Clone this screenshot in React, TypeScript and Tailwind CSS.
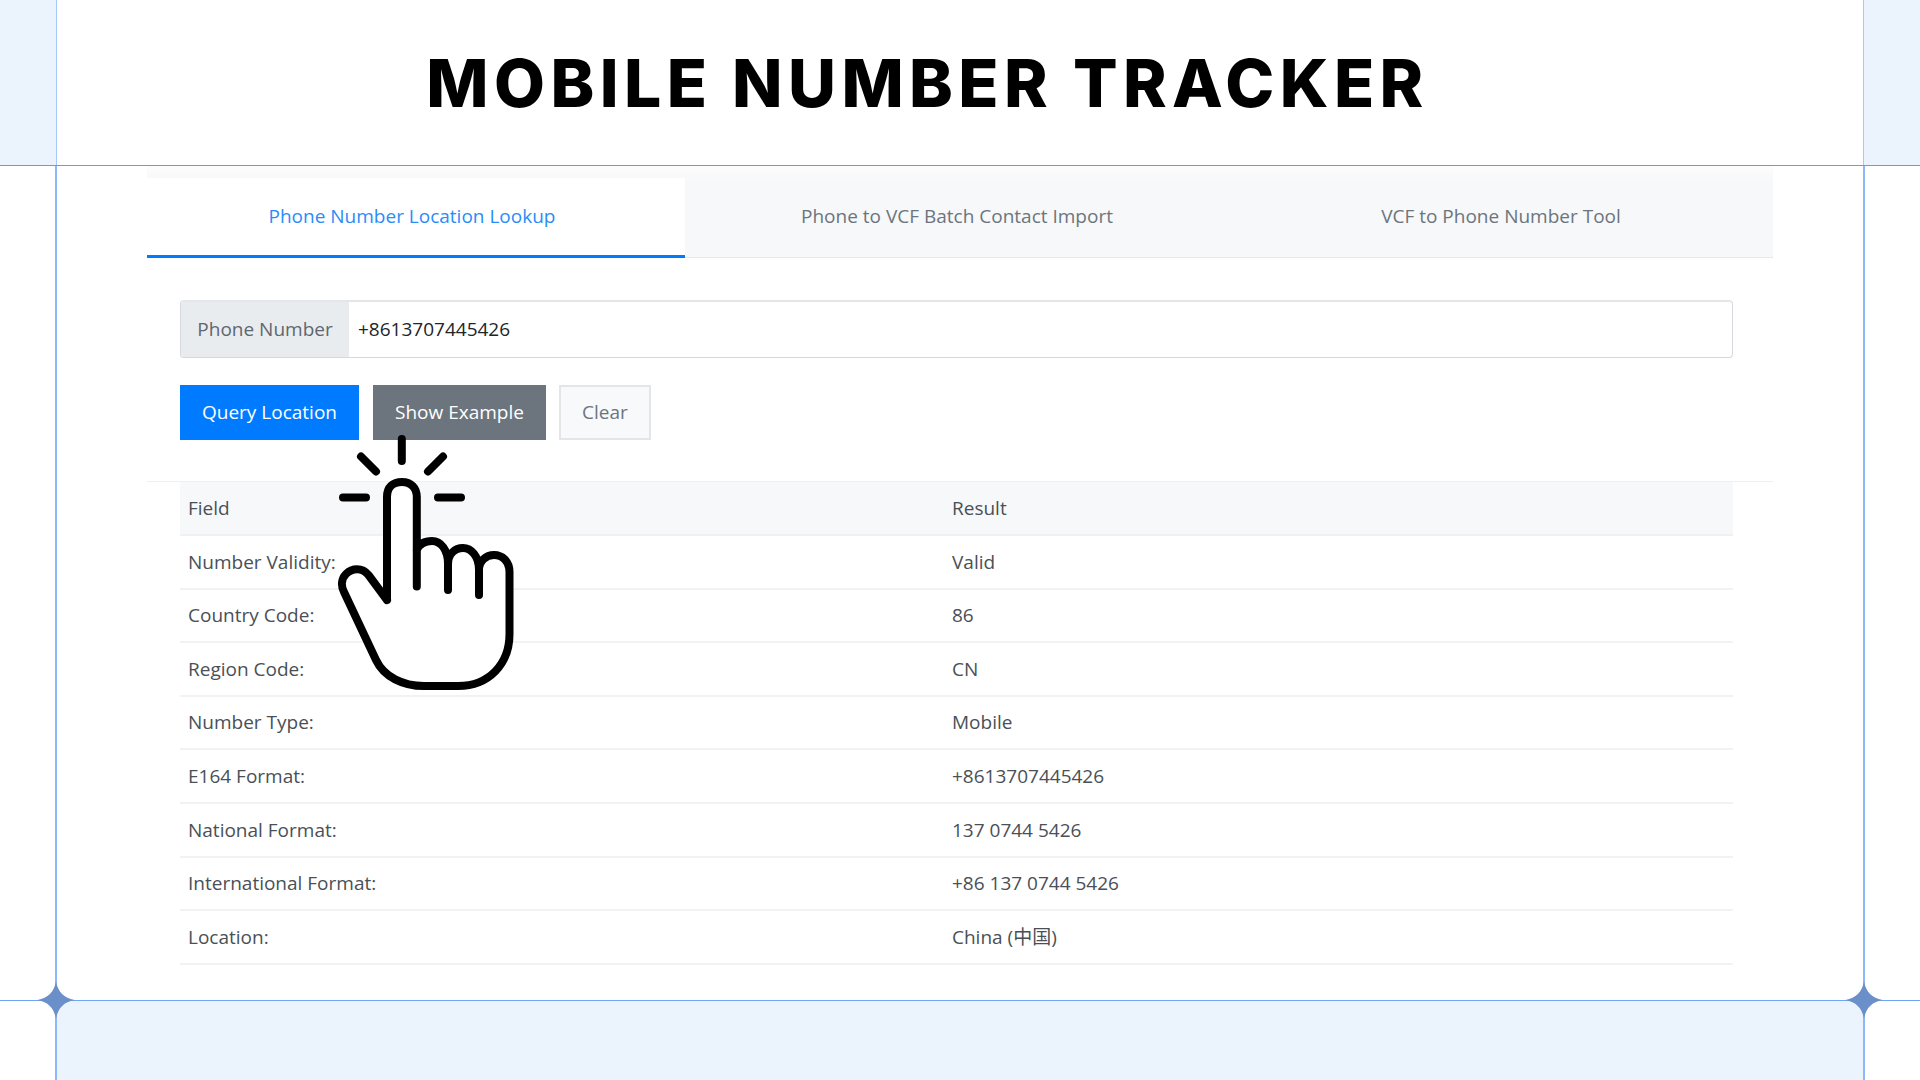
import React from "react";

const rows = [
  ["Number Validity:", "Valid"],
  ["Country Code:", "86"],
  ["Region Code:", "CN"],
  ["Number Type:", "Mobile"],
  ["E164 Format:", "+8613707445426"],
  ["National Format:", "137 0744 5426"],
  ["International Format:", "+86 137 0744 5426"],
  ["Location:", "China (中国)"],
];

const Star = ({ className }: { className: string }) => (
  <svg className={className} width="38" height="38" viewBox="0 0 38 38">
    <path d="M19 0.5 C21 11 27 17 37.5 19 C27 21 21 27 19 37.5 C17 27 11 21 0.5 19 C11 17 17 11 19 0.5 Z" fill="#6b90c9" />
  </svg>
);

const ClickHand = () => (
  <svg className="absolute left-[330px] top-[430px]" width="190" height="270" viewBox="330 430 190 270" fill="none" stroke="#000" strokeWidth="8" strokeLinecap="round" strokeLinejoin="round">
    {/* white silhouette, table lines do not show through the hand */}
    <path stroke="none" fill="#fff" d="M387 600V497C387 487 393 482 402 482C411 482 416.8 488 416.8 497V550C419 545 424 541 432 541C441 541 448 550 448 556C452 550 457 548 463 548C471 548 479 556 479 566C483 559 488 555 494 555C502 555 509.5 561 509.5 572V634C509.5 664 489 686 458 686H424C403 686 384 677 376 660L344 592C341 586 341 579 346 574C352 568 362 567 368.5 575Z" />
    {/* rays */}
    <path d="M401.8 439V461M361 456.5L376 471.5M443 456.5L428 471.5M343 497.5H366M438 497.5H461" />
    {/* outline */}
    <path d="M387 600V497C387 487 393 482 402 482C411 482 416.8 488 416.8 497V586.5M387 600L368.5 575C362 567 352 568 346 574C341 579 341 586 344 592L376 660C384 677 403 686 424 686H458C489 686 509.5 664 509.5 634V572C509.5 561 502 555 494 555C486 555 479 561 479 570V595M479 570C479 556 471 548 463 548C455 548 448 554 448 564V590M448 564C448 550 441 541 432 541C424 541 419 545 416.8 550" />
  </svg>
);

export default function App() {
  return (
    <div className="relative flex h-[1080px] w-[1920px] flex-col overflow-hidden bg-white font-['Open_Sans','Noto_Sans_CJK_SC',sans-serif] text-[19px] text-[#495057]">
      <div className="flex h-[166px] border-b border-[#5f9cf3]">
        <div className="w-[57px] border-r border-[#a9c8f7] bg-[#ebf3fd]" />
        <h1 className="flex flex-1 items-center justify-center pr-[65px] font-['Inter',sans-serif] text-[66px] font-extrabold leading-none tracking-[5.4px] text-black">
          MOBILE NUMBER TRACKER
        </h1>
        <div className="w-[57px] border-l border-[#a9c8f7] bg-[#ebf3fd]" />
      </div>

      <div className="flex h-[834px]">
        <div className="w-[57px] border-r-2 border-[#8ab8f8]" />
        <div className="flex-1 px-[90px]">
          <div className="flex h-[92px] bg-gradient-to-b from-[#fdfdfd] to-[#f7f8fa] to-[15%] pt-[12px]">
            <div className="flex w-[538px] items-center justify-center border-b-[3px] border-[#007bff] bg-white pb-[1px] pr-2 text-[#2b8cf7]">
              Phone Number Location Lookup
            </div>
            <div className="flex flex-1 items-center justify-center border-b border-[#e6e8ea] pb-[3px] text-[#6c757d]">
              Phone to VCF Batch Contact Import
            </div>
            <div className="flex flex-1 items-center justify-center border-b border-[#e6e8ea] pb-[3px] text-[#6c757d]">
              VCF to Phone Number Tool
            </div>
          </div>

          <div className="border-b border-[#eeeff1] pb-[41px] pl-[33px] pr-[40px] pt-[42px]">
            <div className="flex h-[58px] overflow-hidden rounded-[4px] border border-[#d5d8dc] border-t-2 border-t-[#e4e6e9]">
              <div className="flex w-[168px] items-center justify-center bg-[#e9ecef] text-[#5f676f]">Phone Number</div>
              <div className="flex flex-1 items-center px-[9px] text-[#212529]">+8613707445426</div>
            </div>
            <div className="mt-[27px] flex h-[55px]">
              <button className="w-[179px] bg-[#007bff] text-white">Query Location</button>
              <button className="ml-[14px] w-[173px] bg-[#6c757d] text-white">Show Example</button>
              <button className="ml-[13px] w-[92px] border-2 border-[#e3e6e9] bg-[#f8f9fa] text-[#6c757d]">Clear</button>
            </div>
          </div>

          <div className="ml-[33px] mr-[40px]">
            <div className="flex h-[54px] items-center border-b-2 border-[#f0f1f3] bg-[#f7f8fa] px-2">
              <div className="w-[764px]">Field</div>
              <div>Result</div>
            </div>
            {rows.map(([field, result]) => (
              <div key={field} className="flex h-[53.6px] items-center border-b-2 border-[#f1f2f4] px-2">
                <div className="w-[764px]">{field}</div>
                <div>{result}</div>
              </div>
            ))}
          </div>
        </div>
        <div className="w-[57px] border-l-2 border-[#8ab8f8]" />
      </div>

      <div className="flex flex-1 border-t border-[#6ea6f5]">
        <div className="w-[57px] border-r-2 border-[#8ab8f8]" />
        <div className="flex-1 bg-[#ebf3fd]" />
        <div className="w-[57px] border-l-2 border-[#8ab8f8]" />
      </div>

      <Star className="absolute left-[37px] top-[981px]" />
      <Star className="absolute left-[1845px] top-[981px]" />
      <ClickHand />
    </div>
  );
}
